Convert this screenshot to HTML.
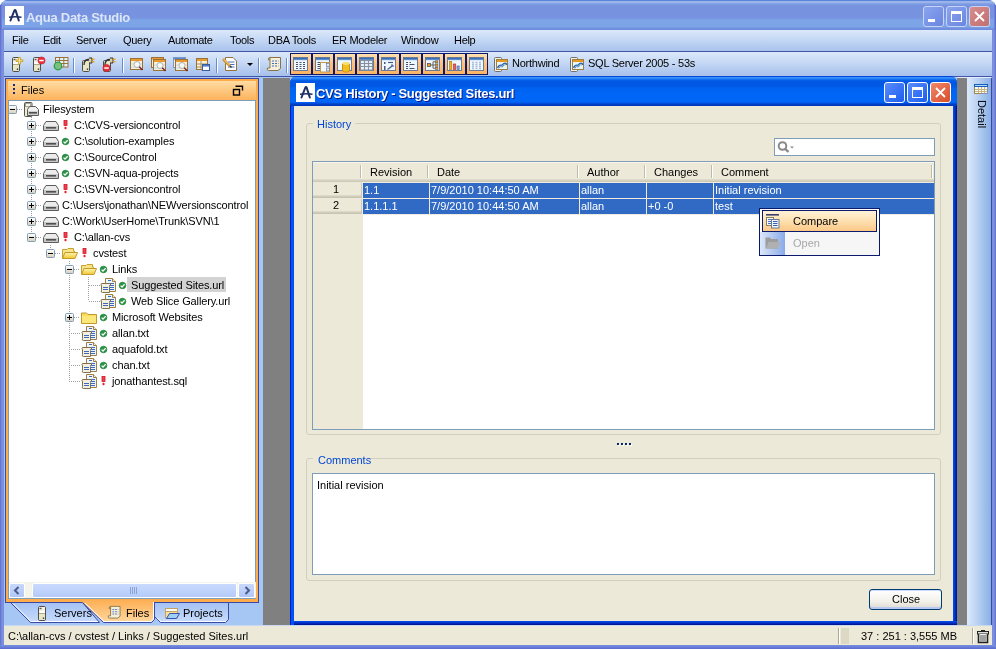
<!DOCTYPE html><html><head><meta charset="utf-8"><style>
*{margin:0;padding:0;box-sizing:border-box}
html,body{width:996px;height:649px;overflow:hidden;background:#fff}
body{position:relative;font-family:"Liberation Sans",sans-serif;font-size:11px;color:#000}
.t{position:absolute;white-space:pre;font-size:11px;line-height:13px;will-change:transform}
svg{overflow:visible}
</style></head><body>
<svg width="0" height="0" style="position:absolute"><defs>
<linearGradient id="wh" x1="0" y1="0" x2="0" y2="1"><stop offset="0" stop-color="#2a5ca8"/><stop offset="1" stop-color="#78a8e0"/></linearGradient>
<linearGradient id="fo" x1="0" y1="0" x2="0" y2="1"><stop offset="0" stop-color="#fff4b0"/><stop offset="1" stop-color="#f0c830"/></linearGradient>
<linearGradient id="eg" x1="0" y1="0" x2="0" y2="1"><stop offset="0" stop-color="#ffffff"/><stop offset="1" stop-color="#d6cfb8"/></linearGradient>
</defs></svg>

<div style="position:absolute;left:0px;top:0px;width:996px;height:649px;background:#7590e0;border-radius:8px 8px 0 0"></div>
<div style="position:absolute;left:0px;top:30px;width:4px;height:619px;background:linear-gradient(90deg,#5a6ad0,#7080d8 25%,#7a90dc 50%,#7890e0)"></div>
<div style="position:absolute;left:992px;top:30px;width:4px;height:619px;background:linear-gradient(90deg,#7890e0,#7a90dc 50%,#7080d8 75%,#5a6ad0)"></div>
<div style="position:absolute;left:0px;top:645px;width:996px;height:4px;background:linear-gradient(180deg,#7890e0,#6a7ed8,#5a6ad0)"></div>
<div style="position:absolute;left:0px;top:0px;width:996px;height:30px;border-radius:8px 8px 0 0;background:linear-gradient(180deg,#5a84dc 0px,#5a84dc 1px,#9cb4ea 1px,#9cb4ea 3px,#86a4e6 3px,#7a9ae2 5px,#7792de 5px,#7894e0 18px,#7a9ee4 19px,#7ca4e6 20px,#7ca4e6 27px,#7494e0 28px,#6c88dc 30px)"></div>
<div style="position:absolute;left:0px;top:5px;width:1px;height:25px;background:#5a6ad0"></div>
<div style="position:absolute;left:1px;top:4px;width:1px;height:26px;background:#7080d8"></div>
<div style="position:absolute;left:995px;top:5px;width:1px;height:25px;background:#5a6ad0"></div>
<div style="position:absolute;left:994px;top:4px;width:1px;height:26px;background:#7080d8"></div>
<div style="position:absolute;left:5px;top:6px;width:19px;height:19px;background:#fff"></div>
<svg style="position:absolute;left:5px;top:6px;" width="19" height="19" viewBox="0 0 19 19"><path d="M5.5 14.5 L9.3 4.6 Q10 3.6 10.7 4.6 L13.8 14.5" stroke="#1e2e64" stroke-width="2" fill="none" stroke-linecap="round"/><path d="M4 11.3 Q10 10.2 16.5 11.3" stroke="#1e2e64" stroke-width="1.5" fill="none"/></svg>
<div class="t" style="left:26px;top:10.5px;font-weight:bold;font-size:13px;line-height:13px;letter-spacing:-0.27px;color:#dce6f8">Aqua Data Studio</div>
<div style="position:absolute;left:923px;top:6px;width:21px;height:21px;border:1px solid #c8d4f4;border-radius:3px;background:linear-gradient(135deg,#8aa4ee,#6a86e0)"></div>
<div style="position:absolute;left:946px;top:6px;width:21px;height:21px;border:1px solid #c8d4f4;border-radius:3px;background:linear-gradient(135deg,#8aa4ee,#6a86e0)"></div>
<div style="position:absolute;left:969px;top:6px;width:21px;height:21px;border:1px solid #c8d4f4;border-radius:3px;background:linear-gradient(135deg,#d88c8c,#c07070)"></div>
<div style="position:absolute;left:928px;top:19px;width:7px;height:3px;background:#fff"></div>
<div style="position:absolute;left:951px;top:11px;width:11px;height:11px;border:1px solid #fff;border-top-width:3px"></div>
<svg style="position:absolute;left:974px;top:11px;" width="11" height="11" viewBox="0 0 11 11"><path d="M1 1 L10 10 M10 1 L1 10" stroke="#fff" stroke-width="1.8"/></svg>
<div style="position:absolute;left:4px;top:30px;width:988px;height:21px;background:linear-gradient(180deg,#dde9fa,#c2d6f4 50%,#a9c3ec)"></div>
<div style="position:absolute;left:4px;top:51px;width:988px;height:1px;background:#4454a8"></div>
<div class="t" style="left:12px;top:34px;letter-spacing:-0.3px">File</div>
<div class="t" style="left:43px;top:34px;letter-spacing:-0.3px">Edit</div>
<div class="t" style="left:76px;top:34px;letter-spacing:-0.3px">Server</div>
<div class="t" style="left:123px;top:34px;letter-spacing:-0.3px">Query</div>
<div class="t" style="left:168px;top:34px;letter-spacing:-0.3px">Automate</div>
<div class="t" style="left:230px;top:34px;letter-spacing:-0.3px">Tools</div>
<div class="t" style="left:268px;top:34px;letter-spacing:-0.3px">DBA Tools</div>
<div class="t" style="left:332px;top:34px;letter-spacing:-0.3px">ER Modeler</div>
<div class="t" style="left:401px;top:34px;letter-spacing:-0.3px">Window</div>
<div class="t" style="left:454px;top:34px;letter-spacing:-0.3px">Help</div>
<div style="position:absolute;left:4px;top:52px;width:988px;height:24px;background:linear-gradient(180deg,#dde9fa,#c2d6f4 50%,#a6c0eb)"></div>
<div style="position:absolute;left:4px;top:76px;width:988px;height:1px;background:#4454a8"></div>
<div style="position:absolute;left:4px;top:77px;width:988px;height:548px;background:#a6c6f4"></div>
<svg style="position:absolute;left:12px;top:57px;" width="16" height="16" viewBox="0 0 16 16"><rect x="0.5" y="0.5" width="7" height="14" rx="1.2" fill="#e9e6c6" stroke="#4e4e4e"/><rect x="1" y="1" width="6" height="4" fill="#f4f2e0"/><rect x="1.5" y="1.8" width="2" height="1.4" fill="#555"/><rect x="1" y="5" width="6" height="2" fill="#fff"/><rect x="1" y="7" width="6" height="0.8" fill="#9a9a80"/><rect x="4.8" y="11.5" width="1.4" height="1.4" fill="#333"/><path d="M7.5 0 L7.5 7.5 M3.8 3.8 L11.2 3.8" stroke="#c89a18" stroke-width="2.4"/><path d="M7.5 0.8 L7.5 6.7 M4.6 3.8 L10.4 3.8" stroke="#f8e8a0" stroke-width="1"/></svg>
<svg style="position:absolute;left:33px;top:57px;" width="16" height="16" viewBox="0 0 16 16"><rect x="0.5" y="0.5" width="7" height="14" rx="1.2" fill="#e9e6c6" stroke="#4e4e4e"/><rect x="1" y="1" width="6" height="4" fill="#f4f2e0"/><rect x="1.5" y="1.8" width="2" height="1.4" fill="#555"/><rect x="1" y="5" width="6" height="2" fill="#fff"/><rect x="1" y="7" width="6" height="0.8" fill="#9a9a80"/><rect x="4.8" y="11.5" width="1.4" height="1.4" fill="#333"/><circle cx="8.5" cy="3.5" r="3.6" fill="#e8303a" stroke="#c02030" stroke-width="0.6"/><rect x="6.3" y="2.8" width="4.4" height="1.5" fill="#fff"/></svg>
<svg style="position:absolute;left:55px;top:57px;" width="16" height="16" viewBox="0 0 16 16"><rect x="0.5" y="0.5" width="12.5" height="9.5" fill="#e0f2fc" stroke="#9a7238"/><path d="M0.5 3.5 L13 3.5 M0.5 6.5 L13 6.5 M4.5 0.5 L4.5 10 M8.8 0.5 L8.8 10" stroke="#9a7238"/><circle cx="3" cy="9" r="3.8" fill="#7cc080" stroke="#2a9a40" stroke-width="1.2"/></svg>
<div style="position:absolute;left:73px;top:58px;width:1px;height:15px;background:#6a8ad0;box-shadow:1px 0 #fff"></div>
<svg style="position:absolute;left:82px;top:57px;" width="16" height="16" viewBox="0 0 16 16"><rect x="0.5" y="3.5" width="7" height="11" rx="1.2" fill="#e9e6c6" stroke="#4e4e4e"/><path d="M2 8 Q2 3 6 2.5 L8 2.5" stroke="#333" stroke-width="1.3" fill="none"/><path d="M7 1 L10 1 L10 6 L7 6" fill="#d8d0a8" stroke="#333" stroke-width="1"/><rect x="10" y="1.5" width="2.5" height="1.4" fill="#f0a020"/><rect x="10" y="4" width="2.5" height="1.4" fill="#f0a020"/><rect x="4.8" y="11.5" width="1.4" height="1.4" fill="#333"/></svg>
<svg style="position:absolute;left:103px;top:57px;" width="16" height="16" viewBox="0 0 16 16"><rect x="0.5" y="3.5" width="7" height="11" rx="1.2" fill="#e9e6c6" stroke="#4e4e4e"/><path d="M2 8 Q2 3 6 2.5 L8 2.5" stroke="#333" stroke-width="1.3" fill="none"/><path d="M7 1 L10 1 L10 6 L7 6" fill="#d8d0a8" stroke="#333" stroke-width="1"/><rect x="10" y="1.5" width="2.5" height="1.4" fill="#f0a020"/><rect x="10" y="4" width="2.5" height="1.4" fill="#f0a020"/><rect x="4.8" y="11.5" width="1.4" height="1.4" fill="#333"/><circle cx="3.5" cy="11" r="3.6" fill="#e8303a" stroke="#c02030" stroke-width="0.6"/><rect x="1.3" y="10.3" width="4.4" height="1.5" fill="#fff"/></svg>
<div style="position:absolute;left:122px;top:58px;width:1px;height:15px;background:#6a8ad0;box-shadow:1px 0 #fff"></div>
<svg style="position:absolute;left:130px;top:58px;" width="16" height="16" viewBox="0 0 16 16"><rect x="0.5" y="0.5" width="12" height="11" fill="#f4f0dc" stroke="#9a7238"/><rect x="1" y="1" width="11" height="2" fill="#e89a30"/><path d="M1 6 L12 6 M1 9 L12 9" stroke="#c8d8e8"/><circle cx="7" cy="6.5" r="3" fill="#f8f8f8" stroke="#a0a0a0" stroke-width="0.8"/><path d="M9.2 8.7 L12.5 12" stroke="#7a2020" stroke-width="1.4"/></svg>
<svg style="position:absolute;left:151px;top:57px;" width="16" height="16" viewBox="0 0 16 16"><rect x="0.5" y="0.5" width="12" height="10" fill="#f4f0dc" stroke="#9a7238"/><rect x="1" y="1" width="11" height="1.6" fill="#e89a30"/><g transform="translate(2,2)"><rect x="0.5" y="0.5" width="12" height="11" fill="#f4f0dc" stroke="#9a7238"/><rect x="1" y="1" width="11" height="2" fill="#e89a30"/><path d="M1 6 L12 6 M1 9 L12 9" stroke="#c8d8e8"/><circle cx="7" cy="6.5" r="3" fill="#f8f8f8" stroke="#a0a0a0" stroke-width="0.8"/><path d="M9.2 8.7 L12.5 12" stroke="#7a2020" stroke-width="1.4"/></g></svg>
<svg style="position:absolute;left:173px;top:57px;" width="16" height="16" viewBox="0 0 16 16"><rect x="0.5" y="0.5" width="12" height="10" fill="#e8f0f8" stroke="#7a98c8"/><rect x="1" y="1" width="11" height="1.6" fill="#5a8ad0"/><g transform="translate(2,2)"><rect x="0.5" y="0.5" width="12" height="11" fill="#f4f0dc" stroke="#9a7238"/><rect x="1" y="1" width="11" height="2" fill="#e89a30"/><path d="M1 6 L12 6 M1 9 L12 9" stroke="#c8d8e8"/><circle cx="7" cy="6.5" r="3" fill="#f8f8f8" stroke="#a0a0a0" stroke-width="0.8"/><path d="M9.2 8.7 L12.5 12" stroke="#7a2020" stroke-width="1.4"/></g></svg>
<svg style="position:absolute;left:196px;top:58px;" width="16" height="16" viewBox="0 0 16 16"><rect x="0.5" y="0.5" width="11" height="11" fill="#f4f0dc" stroke="#9a7238"/><rect x="1" y="1" width="10" height="2" fill="#e89a30"/><path d="M1 6 L11 6 M1 9 L11 9 M5 3 L5 11" stroke="#a89060"/><rect x="6.5" y="6.5" width="7" height="6" fill="#fff" stroke="#3a5a98"/><rect x="7" y="7" width="6" height="1.6" fill="#4a7ad0"/></svg>
<div style="position:absolute;left:216px;top:58px;width:1px;height:15px;background:#6a8ad0;box-shadow:1px 0 #fff"></div>
<svg style="position:absolute;left:222px;top:56px;" width="16" height="16" viewBox="0 0 16 16"><path d="M3.5 1.5 L11 1.5 L14.5 5 L14.5 14.5 L3.5 14.5 Z" fill="#fff" stroke="#9a7238"/><path d="M6 6 L12.5 6 M6 8.5 L12.5 8.5 M6 11 L12.5 11" stroke="#4c6cb8"/><path d="M1 3 L8 10" stroke="#c89030" stroke-width="2.6"/><path d="M1.5 3 L7.5 9" stroke="#f8d890" stroke-width="1"/><path d="M8 10 L9.5 11.5" stroke="#333" stroke-width="1.4"/></svg>
<svg style="position:absolute;left:247px;top:63px;" width="6" height="4" viewBox="0 0 6 4"><path d="M0 0 L6 0 L3 3 Z" fill="#000"/></svg>
<div style="position:absolute;left:258px;top:58px;width:1px;height:15px;background:#6a8ad0;box-shadow:1px 0 #fff"></div>
<svg style="position:absolute;left:266px;top:56px;" width="16" height="16" viewBox="0 0 16 16"><path d="M4 1.5 L14.5 1.5 L14.5 12.5 L12 14.5 L2.5 14.5 Q0.5 14.5 1.5 12 L4 12 Z" fill="#f4f0dc" stroke="#8a7440"/><path d="M4 1.5 Q2 1.5 2.5 4 L4 4" fill="none" stroke="#8a7440"/><path d="M6 5 L12.5 5 M6 7.5 L12.5 7.5 M6 10 L12.5 10" stroke="#4c6cb8" stroke-dasharray="2 1"/></svg>
<div style="position:absolute;left:286px;top:58px;width:1px;height:15px;background:#6a8ad0;box-shadow:1px 0 #fff"></div>
<div style="position:absolute;left:290px;top:53px;width:198px;height:22px;background:#0a1a6e"></div>
<div style="position:absolute;left:291px;top:54px;width:20px;height:20px;background:linear-gradient(180deg,#ffe0b0,#fdc07a 50%,#fcb462)"></div>
<svg style="position:absolute;left:293px;top:57px;" width="16" height="16" viewBox="0 0 16 16"><rect x="0.5" y="0.5" width="14" height="13" fill="#f0f8ff" stroke="#6a7a98"/><rect x="1" y="1" width="13" height="2.2" fill="url(#wh)"/><path d="M3 5.5 H5 M6.5 5.5 H8.5 M10 5.5 H12 M3 7.5 H5 M6.5 7.5 H8.5 M10 7.5 H12 M3 9.5 H5 M6.5 9.5 H8.5 M10 9.5 H12 M3 11.5 H5 M6.5 11.5 H8.5 M10 11.5 H12" stroke="#4a5068" stroke-width="1.2"/></svg>
<div style="position:absolute;left:313px;top:54px;width:20px;height:20px;background:linear-gradient(180deg,#ffe0b0,#fdc07a 50%,#fcb462)"></div>
<svg style="position:absolute;left:315px;top:57px;" width="16" height="16" viewBox="0 0 16 16"><rect x="0.5" y="0.5" width="14" height="13" fill="#f0f8ff" stroke="#6a7a98"/><rect x="1" y="1" width="13" height="2.2" fill="url(#wh)"/><path d="M2.5 5.5 H5 M2.5 7.5 H5 M2.5 9.5 H5 M2.5 11.5 H5" stroke="#4a5068"/><rect x="5.5" y="5.5" width="9" height="9.5" fill="#f4f8ff" stroke="#b89c58"/><rect x="11.5" y="6.5" width="3" height="3" fill="#dce8f8" stroke="#5a6a90" stroke-width="0.6"/><rect x="11.5" y="11" width="3" height="3" fill="#dce8f8" stroke="#5a6a90" stroke-width="0.6"/></svg>
<div style="position:absolute;left:335px;top:54px;width:20px;height:20px;background:linear-gradient(180deg,#ffe0b0,#fdc07a 50%,#fcb462)"></div>
<svg style="position:absolute;left:337px;top:57px;" width="16" height="16" viewBox="0 0 16 16"><rect x="0.5" y="0.5" width="14" height="13" fill="#f0f8ff" stroke="#6a7a98"/><rect x="1" y="1" width="13" height="2.2" fill="url(#wh)"/><rect x="5.5" y="6" width="7" height="9" rx="2" fill="#f0c020" stroke="#d09010"/><ellipse cx="9" cy="6.5" rx="3.5" ry="1.4" fill="#f8e070"/></svg>
<div style="position:absolute;left:357px;top:54px;width:20px;height:20px;background:linear-gradient(180deg,#ffe0b0,#fdc07a 50%,#fcb462)"></div>
<svg style="position:absolute;left:359px;top:57px;" width="16" height="16" viewBox="0 0 16 16"><rect x="0.5" y="0.5" width="14" height="13" fill="#f0f8ff" stroke="#6a7a98"/><rect x="1" y="1" width="13" height="2.2" fill="url(#wh)"/><rect x="1.5" y="3.5" width="12" height="9.5" fill="#e8f4fc" stroke="#8890a0"/><path d="M1.5 6.5 H13.5 M1.5 9.5 H13.5 M5.5 3.5 V13 M9.5 3.5 V13" stroke="#8890a0" stroke-width="1.2"/></svg>
<div style="position:absolute;left:379px;top:54px;width:20px;height:20px;background:linear-gradient(180deg,#ffe0b0,#fdc07a 50%,#fcb462)"></div>
<svg style="position:absolute;left:381px;top:57px;" width="16" height="16" viewBox="0 0 16 16"><rect x="0.5" y="0.5" width="14" height="13" fill="#f0f8ff" stroke="#6a7a98"/><rect x="1" y="1" width="13" height="2.2" fill="url(#wh)"/><rect x="3" y="9" width="1.5" height="4" fill="#4a5a88"/><rect x="3" y="5" width="1.5" height="2" fill="#4a5a88"/><path d="M7 5.5 H12" stroke="#4a5a88" stroke-width="1.2"/><path d="M6.5 12.5 Q9 11 11.5 8.5" stroke="#4a5a88" stroke-width="1.2" fill="none"/><path d="M10 8 L12 8 L12 10" stroke="#4a5a88" fill="none"/></svg>
<div style="position:absolute;left:401px;top:54px;width:20px;height:20px;background:linear-gradient(180deg,#ffe0b0,#fdc07a 50%,#fcb462)"></div>
<svg style="position:absolute;left:403px;top:57px;" width="16" height="16" viewBox="0 0 16 16"><rect x="0.5" y="0.5" width="14" height="13" fill="#f0f8ff" stroke="#6a7a98"/><rect x="1" y="1" width="13" height="2.2" fill="url(#wh)"/><path d="M3 5.5 H5 M6.5 5.5 H8 M3 7.5 H5 M6.5 7.5 H11.5 M3 9.5 H5 M6.5 9.5 H7 M3 11.5 H5 M6.5 11.5 H11.5" stroke="#4a5068" stroke-width="1.1"/></svg>
<div style="position:absolute;left:423px;top:54px;width:20px;height:20px;background:linear-gradient(180deg,#ffe0b0,#fdc07a 50%,#fcb462)"></div>
<svg style="position:absolute;left:425px;top:57px;" width="16" height="16" viewBox="0 0 16 16"><rect x="0.5" y="0.5" width="14" height="13" fill="#f0f8ff" stroke="#6a7a98"/><rect x="1" y="1" width="13" height="2.2" fill="url(#wh)"/><rect x="2.5" y="6.5" width="3" height="3" fill="#f0a020" stroke="#555" stroke-width="0.8"/><path d="M5.5 8 H8 M8 4.8 V11.2 M8 4.8 H10.5 M8 8 H10.5 M8 11.2 H10.5" stroke="#555" stroke-width="0.9" fill="none"/><rect x="10.5" y="3.8" width="2.4" height="2.2" fill="#f0a020" stroke="#555" stroke-width="0.6"/><rect x="10.5" y="7" width="2.4" height="2.2" fill="#f0a020" stroke="#555" stroke-width="0.6"/><rect x="10.5" y="10.2" width="2.4" height="2.2" fill="#f0a020" stroke="#555" stroke-width="0.6"/></svg>
<div style="position:absolute;left:445px;top:54px;width:20px;height:20px;background:linear-gradient(180deg,#ffe0b0,#fdc07a 50%,#fcb462)"></div>
<svg style="position:absolute;left:447px;top:57px;" width="16" height="16" viewBox="0 0 16 16"><rect x="0.5" y="0.5" width="14" height="13" fill="#f0f8ff" stroke="#6a7a98"/><rect x="1" y="1" width="13" height="2.2" fill="url(#wh)"/><rect x="2.5" y="4.5" width="2.2" height="8" fill="#f0b020" stroke="#b08010" stroke-width="0.7"/><rect x="6.3" y="7" width="2.4" height="5.5" fill="#f06060" stroke="#c03030" stroke-width="0.7"/><rect x="10" y="9" width="2.2" height="3.5" fill="#80a8d8" stroke="#4a70a8" stroke-width="0.7"/></svg>
<div style="position:absolute;left:467px;top:54px;width:20px;height:20px;background:linear-gradient(180deg,#ffe0b0,#fdc07a 50%,#fcb462)"></div>
<svg style="position:absolute;left:469px;top:57px;" width="16" height="16" viewBox="0 0 16 16"><rect x="0.5" y="0.5" width="14" height="13" fill="#f0f8ff" stroke="#6a7a98"/><rect x="1" y="1" width="13" height="2.2" fill="url(#wh)"/><path d="M3 5.5 H5 M6.5 5.5 H8.5 M10 5.5 H12 M3 7.5 H5 M6.5 7.5 H8.5 M10 7.5 H12 M3 9.5 H5 M6.5 9.5 H8.5 M10 9.5 H12 M3 11.5 H5 M6.5 11.5 H8.5 M10 11.5 H12" stroke="#a8bcd8" stroke-width="1.3"/></svg>
<svg style="position:absolute;left:494px;top:57px;" width="16" height="16" viewBox="0 0 16 16"><rect x="0.5" y="0.5" width="7" height="14" rx="1" fill="#f4f2ea" stroke="#707070"/><rect x="2.5" y="2.5" width="11" height="10" fill="#e8f4fc" stroke="#a08040"/><rect x="3" y="3" width="10" height="2" fill="#e89a20"/><path d="M4 11 Q5 8 8 9 L10 7 Q12 6 12.5 8" stroke="#2a60b0" stroke-width="2.4" fill="none"/><path d="M4.5 10.5 Q5.5 8.5 8 9.3 L10 7.5 Q11.5 6.8 12 8" stroke="#a8d0c8" stroke-width="1" fill="none"/></svg>
<div class="t" style="left:512px;top:57px;letter-spacing:-0.24px">Northwind</div>
<svg style="position:absolute;left:570px;top:57px;" width="16" height="16" viewBox="0 0 16 16"><rect x="0.5" y="0.5" width="7" height="14" rx="1" fill="#f4f2ea" stroke="#707070"/><rect x="2.5" y="2.5" width="11" height="10" fill="#e8f4fc" stroke="#a08040"/><rect x="3" y="3" width="10" height="2" fill="#e89a20"/><path d="M4 11 Q5 8 8 9 L10 7 Q12 6 12.5 8" stroke="#2a60b0" stroke-width="2.4" fill="none"/><path d="M4.5 10.5 Q5.5 8.5 8 9.3 L10 7.5 Q11.5 6.8 12 8" stroke="#a8d0c8" stroke-width="1" fill="none"/></svg>
<div class="t" style="left:588px;top:57px;letter-spacing:-0.24px">SQL Server 2005 - 53s</div>
<div style="position:absolute;left:5px;top:78px;width:254px;height:525px;background:#3a48a8"></div>
<div style="position:absolute;left:6px;top:79px;width:252px;height:523px;background:#ffad4a"></div>
<div style="position:absolute;left:8px;top:81px;width:248px;height:19px;background:linear-gradient(180deg,#ffdca4,#fdb35c)"></div>
<div style="position:absolute;left:13px;top:84px;width:2px;height:2px;background:#1a2a7a"></div>
<div style="position:absolute;left:13px;top:88px;width:2px;height:2px;background:#1a2a7a"></div>
<div style="position:absolute;left:13px;top:92px;width:2px;height:2px;background:#1a2a7a"></div>
<div class="t" style="left:21px;top:84px;">Files</div>
<svg style="position:absolute;left:232px;top:85px;" width="12" height="11" viewBox="0 0 12 11"><rect x="1.5" y="4.5" width="6" height="5.5" fill="none" stroke="#000" stroke-width="1.4"/><path d="M3.5 1.2 L10.5 1.2 L10.5 5.5" fill="none" stroke="#000" stroke-width="1.4"/></svg>
<div style="position:absolute;left:8px;top:100px;width:248px;height:499px;background:#fff;border:1px solid #7f9db9"></div>
<div style="position:absolute;left:31px;top:117px;width:1px;height:120px;background:repeating-linear-gradient(180deg,#a0a0a0 0 1px,transparent 1px 2px)"></div>
<div style="position:absolute;left:50px;top:245px;width:1px;height:8px;background:repeating-linear-gradient(180deg,#a0a0a0 0 1px,transparent 1px 2px)"></div>
<div style="position:absolute;left:69px;top:261px;width:1px;height:120px;background:repeating-linear-gradient(180deg,#a0a0a0 0 1px,transparent 1px 2px)"></div>
<div style="position:absolute;left:88px;top:277px;width:1px;height:24px;background:repeating-linear-gradient(180deg,#a0a0a0 0 1px,transparent 1px 2px)"></div>
<div style="position:absolute;left:17px;top:109px;width:6px;height:1px;background:repeating-linear-gradient(90deg,#a0a0a0 0 1px,transparent 1px 2px)"></div>
<svg style="position:absolute;left:8px;top:105px;" width="9" height="9" viewBox="0 0 9 9"><rect x="0.5" y="0.5" width="8" height="8" rx="1" fill="url(#eg)" stroke="#7f9db9"/><path d="M2 4.5 L7 4.5" stroke="#000" stroke-width="1"/></svg>
<svg style="position:absolute;left:24px;top:102px;" width="16" height="16" viewBox="0 0 16 16"><rect x="0.5" y="0.5" width="7.5" height="14" rx="1" fill="#eeeacc" stroke="#555"/><rect x="1.5" y="1.5" width="5" height="3" fill="#f8f6e8" stroke="#777" stroke-width="0.6"/><path d="M5.5 4.5 L11.5 4.5 L14.5 7.5 L14.5 13.5 L3.5 13.5 L3.5 7.5 Z" fill="#f0f0f0" stroke="#5c5c5c"/><rect x="4" y="9" width="10" height="4" fill="#d0d0d0"/><rect x="5" y="10" width="8" height="1.6" fill="#505050"/></svg>
<div class="t" style="left:43px;top:103px;letter-spacing:-0.12px">Filesystem</div>
<div style="position:absolute;left:36px;top:125px;width:6px;height:1px;background:repeating-linear-gradient(90deg,#a0a0a0 0 1px,transparent 1px 2px)"></div>
<svg style="position:absolute;left:27px;top:121px;" width="9" height="9" viewBox="0 0 9 9"><rect x="0.5" y="0.5" width="8" height="8" rx="1" fill="url(#eg)" stroke="#7f9db9"/><path d="M2 4.5 L7 4.5" stroke="#000" stroke-width="1"/><path d="M4.5 2 L4.5 7" stroke="#000" stroke-width="1"/></svg>
<svg style="position:absolute;left:43px;top:120px;" width="16" height="12" viewBox="0 0 16 12"><path d="M3 1.5 L13 1.5 L15.5 5.5 L15.5 10.5 L0.5 10.5 L0.5 5.5 Z" fill="#ececec" stroke="#5c5c5c" stroke-width="1"/><rect x="1" y="6" width="14" height="4" fill="#c8c8c8"/><rect x="3" y="7" width="10" height="1.6" fill="#505050"/></svg>
<svg style="position:absolute;left:63px;top:120px;" width="5" height="10" viewBox="0 0 5 10"><rect x="1" y="0.5" width="3" height="5" fill="#f04048" stroke="#d01828" stroke-width="0.8"/><path d="M2.5 6.5 L4 8 L2.5 9.5 L1 8 Z" fill="#e82030"/></svg>
<div class="t" style="left:74px;top:119px;letter-spacing:-0.12px">C:&#92;CVS-versioncontrol</div>
<div style="position:absolute;left:36px;top:141px;width:6px;height:1px;background:repeating-linear-gradient(90deg,#a0a0a0 0 1px,transparent 1px 2px)"></div>
<svg style="position:absolute;left:27px;top:137px;" width="9" height="9" viewBox="0 0 9 9"><rect x="0.5" y="0.5" width="8" height="8" rx="1" fill="url(#eg)" stroke="#7f9db9"/><path d="M2 4.5 L7 4.5" stroke="#000" stroke-width="1"/><path d="M4.5 2 L4.5 7" stroke="#000" stroke-width="1"/></svg>
<svg style="position:absolute;left:43px;top:136px;" width="16" height="12" viewBox="0 0 16 12"><path d="M3 1.5 L13 1.5 L15.5 5.5 L15.5 10.5 L0.5 10.5 L0.5 5.5 Z" fill="#ececec" stroke="#5c5c5c" stroke-width="1"/><rect x="1" y="6" width="14" height="4" fill="#c8c8c8"/><rect x="3" y="7" width="10" height="1.6" fill="#505050"/></svg>
<svg style="position:absolute;left:62px;top:138px;" width="7" height="7" viewBox="0 0 7 7"><circle cx="3.5" cy="3.5" r="3.3" fill="#2a9244" stroke="#168030" stroke-width="0.7"/><path d="M1.6 3.6 L3 5.1 L5.6 2.2" stroke="#fff" stroke-width="1.3" fill="none"/></svg>
<div class="t" style="left:74px;top:135px;letter-spacing:-0.12px">C:&#92;solution-examples</div>
<div style="position:absolute;left:36px;top:157px;width:6px;height:1px;background:repeating-linear-gradient(90deg,#a0a0a0 0 1px,transparent 1px 2px)"></div>
<svg style="position:absolute;left:27px;top:153px;" width="9" height="9" viewBox="0 0 9 9"><rect x="0.5" y="0.5" width="8" height="8" rx="1" fill="url(#eg)" stroke="#7f9db9"/><path d="M2 4.5 L7 4.5" stroke="#000" stroke-width="1"/><path d="M4.5 2 L4.5 7" stroke="#000" stroke-width="1"/></svg>
<svg style="position:absolute;left:43px;top:152px;" width="16" height="12" viewBox="0 0 16 12"><path d="M3 1.5 L13 1.5 L15.5 5.5 L15.5 10.5 L0.5 10.5 L0.5 5.5 Z" fill="#ececec" stroke="#5c5c5c" stroke-width="1"/><rect x="1" y="6" width="14" height="4" fill="#c8c8c8"/><rect x="3" y="7" width="10" height="1.6" fill="#505050"/></svg>
<svg style="position:absolute;left:62px;top:154px;" width="7" height="7" viewBox="0 0 7 7"><circle cx="3.5" cy="3.5" r="3.3" fill="#2a9244" stroke="#168030" stroke-width="0.7"/><path d="M1.6 3.6 L3 5.1 L5.6 2.2" stroke="#fff" stroke-width="1.3" fill="none"/></svg>
<div class="t" style="left:74px;top:151px;letter-spacing:-0.12px">C:&#92;SourceControl</div>
<div style="position:absolute;left:36px;top:173px;width:6px;height:1px;background:repeating-linear-gradient(90deg,#a0a0a0 0 1px,transparent 1px 2px)"></div>
<svg style="position:absolute;left:27px;top:169px;" width="9" height="9" viewBox="0 0 9 9"><rect x="0.5" y="0.5" width="8" height="8" rx="1" fill="url(#eg)" stroke="#7f9db9"/><path d="M2 4.5 L7 4.5" stroke="#000" stroke-width="1"/><path d="M4.5 2 L4.5 7" stroke="#000" stroke-width="1"/></svg>
<svg style="position:absolute;left:43px;top:168px;" width="16" height="12" viewBox="0 0 16 12"><path d="M3 1.5 L13 1.5 L15.5 5.5 L15.5 10.5 L0.5 10.5 L0.5 5.5 Z" fill="#ececec" stroke="#5c5c5c" stroke-width="1"/><rect x="1" y="6" width="14" height="4" fill="#c8c8c8"/><rect x="3" y="7" width="10" height="1.6" fill="#505050"/></svg>
<svg style="position:absolute;left:62px;top:170px;" width="7" height="7" viewBox="0 0 7 7"><circle cx="3.5" cy="3.5" r="3.3" fill="#2a9244" stroke="#168030" stroke-width="0.7"/><path d="M1.6 3.6 L3 5.1 L5.6 2.2" stroke="#fff" stroke-width="1.3" fill="none"/></svg>
<div class="t" style="left:74px;top:167px;letter-spacing:-0.12px">C:&#92;SVN-aqua-projects</div>
<div style="position:absolute;left:36px;top:189px;width:6px;height:1px;background:repeating-linear-gradient(90deg,#a0a0a0 0 1px,transparent 1px 2px)"></div>
<svg style="position:absolute;left:27px;top:185px;" width="9" height="9" viewBox="0 0 9 9"><rect x="0.5" y="0.5" width="8" height="8" rx="1" fill="url(#eg)" stroke="#7f9db9"/><path d="M2 4.5 L7 4.5" stroke="#000" stroke-width="1"/><path d="M4.5 2 L4.5 7" stroke="#000" stroke-width="1"/></svg>
<svg style="position:absolute;left:43px;top:184px;" width="16" height="12" viewBox="0 0 16 12"><path d="M3 1.5 L13 1.5 L15.5 5.5 L15.5 10.5 L0.5 10.5 L0.5 5.5 Z" fill="#ececec" stroke="#5c5c5c" stroke-width="1"/><rect x="1" y="6" width="14" height="4" fill="#c8c8c8"/><rect x="3" y="7" width="10" height="1.6" fill="#505050"/></svg>
<svg style="position:absolute;left:63px;top:184px;" width="5" height="10" viewBox="0 0 5 10"><rect x="1" y="0.5" width="3" height="5" fill="#f04048" stroke="#d01828" stroke-width="0.8"/><path d="M2.5 6.5 L4 8 L2.5 9.5 L1 8 Z" fill="#e82030"/></svg>
<div class="t" style="left:74px;top:183px;letter-spacing:-0.12px">C:&#92;SVN-versioncontrol</div>
<div style="position:absolute;left:36px;top:205px;width:6px;height:1px;background:repeating-linear-gradient(90deg,#a0a0a0 0 1px,transparent 1px 2px)"></div>
<svg style="position:absolute;left:27px;top:201px;" width="9" height="9" viewBox="0 0 9 9"><rect x="0.5" y="0.5" width="8" height="8" rx="1" fill="url(#eg)" stroke="#7f9db9"/><path d="M2 4.5 L7 4.5" stroke="#000" stroke-width="1"/><path d="M4.5 2 L4.5 7" stroke="#000" stroke-width="1"/></svg>
<svg style="position:absolute;left:43px;top:200px;" width="16" height="12" viewBox="0 0 16 12"><path d="M3 1.5 L13 1.5 L15.5 5.5 L15.5 10.5 L0.5 10.5 L0.5 5.5 Z" fill="#ececec" stroke="#5c5c5c" stroke-width="1"/><rect x="1" y="6" width="14" height="4" fill="#c8c8c8"/><rect x="3" y="7" width="10" height="1.6" fill="#505050"/></svg>
<div class="t" style="left:62px;top:199px;letter-spacing:-0.12px">C:&#92;Users&#92;jonathan&#92;NEWversionscontrol</div>
<div style="position:absolute;left:36px;top:221px;width:6px;height:1px;background:repeating-linear-gradient(90deg,#a0a0a0 0 1px,transparent 1px 2px)"></div>
<svg style="position:absolute;left:27px;top:217px;" width="9" height="9" viewBox="0 0 9 9"><rect x="0.5" y="0.5" width="8" height="8" rx="1" fill="url(#eg)" stroke="#7f9db9"/><path d="M2 4.5 L7 4.5" stroke="#000" stroke-width="1"/><path d="M4.5 2 L4.5 7" stroke="#000" stroke-width="1"/></svg>
<svg style="position:absolute;left:43px;top:216px;" width="16" height="12" viewBox="0 0 16 12"><path d="M3 1.5 L13 1.5 L15.5 5.5 L15.5 10.5 L0.5 10.5 L0.5 5.5 Z" fill="#ececec" stroke="#5c5c5c" stroke-width="1"/><rect x="1" y="6" width="14" height="4" fill="#c8c8c8"/><rect x="3" y="7" width="10" height="1.6" fill="#505050"/></svg>
<div class="t" style="left:62px;top:215px;letter-spacing:-0.12px">C:&#92;Work&#92;UserHome&#92;Trunk&#92;SVN&#92;1</div>
<div style="position:absolute;left:36px;top:237px;width:6px;height:1px;background:repeating-linear-gradient(90deg,#a0a0a0 0 1px,transparent 1px 2px)"></div>
<svg style="position:absolute;left:27px;top:233px;" width="9" height="9" viewBox="0 0 9 9"><rect x="0.5" y="0.5" width="8" height="8" rx="1" fill="url(#eg)" stroke="#7f9db9"/><path d="M2 4.5 L7 4.5" stroke="#000" stroke-width="1"/></svg>
<svg style="position:absolute;left:43px;top:232px;" width="16" height="12" viewBox="0 0 16 12"><path d="M3 1.5 L13 1.5 L15.5 5.5 L15.5 10.5 L0.5 10.5 L0.5 5.5 Z" fill="#ececec" stroke="#5c5c5c" stroke-width="1"/><rect x="1" y="6" width="14" height="4" fill="#c8c8c8"/><rect x="3" y="7" width="10" height="1.6" fill="#505050"/></svg>
<svg style="position:absolute;left:63px;top:232px;" width="5" height="10" viewBox="0 0 5 10"><rect x="1" y="0.5" width="3" height="5" fill="#f04048" stroke="#d01828" stroke-width="0.8"/><path d="M2.5 6.5 L4 8 L2.5 9.5 L1 8 Z" fill="#e82030"/></svg>
<div class="t" style="left:74px;top:231px;letter-spacing:-0.12px">C:&#92;allan-cvs</div>
<div style="position:absolute;left:55px;top:253px;width:6px;height:1px;background:repeating-linear-gradient(90deg,#a0a0a0 0 1px,transparent 1px 2px)"></div>
<svg style="position:absolute;left:46px;top:249px;" width="9" height="9" viewBox="0 0 9 9"><rect x="0.5" y="0.5" width="8" height="8" rx="1" fill="url(#eg)" stroke="#7f9db9"/><path d="M2 4.5 L7 4.5" stroke="#000" stroke-width="1"/></svg>
<svg style="position:absolute;left:62px;top:248px;" width="16" height="12" viewBox="0 0 16 12"><path d="M0.5 10.5 V1.5 H5 L6 0.5 H11.5 V3 H12.5 V5" fill="#f8e488" stroke="#c8a030"/><path d="M0.5 10.5 L3 4.5 H15.5 L13 10.5 Z" fill="url(#fo)" stroke="#c39a2a"/></svg>
<svg style="position:absolute;left:82px;top:248px;" width="5" height="10" viewBox="0 0 5 10"><rect x="1" y="0.5" width="3" height="5" fill="#f04048" stroke="#d01828" stroke-width="0.8"/><path d="M2.5 6.5 L4 8 L2.5 9.5 L1 8 Z" fill="#e82030"/></svg>
<div class="t" style="left:93px;top:247px;letter-spacing:-0.12px">cvstest</div>
<div style="position:absolute;left:74px;top:269px;width:6px;height:1px;background:repeating-linear-gradient(90deg,#a0a0a0 0 1px,transparent 1px 2px)"></div>
<svg style="position:absolute;left:65px;top:265px;" width="9" height="9" viewBox="0 0 9 9"><rect x="0.5" y="0.5" width="8" height="8" rx="1" fill="url(#eg)" stroke="#7f9db9"/><path d="M2 4.5 L7 4.5" stroke="#000" stroke-width="1"/></svg>
<svg style="position:absolute;left:81px;top:264px;" width="16" height="12" viewBox="0 0 16 12"><path d="M0.5 10.5 V1.5 H5 L6 0.5 H11.5 V3 H12.5 V5" fill="#f8e488" stroke="#c8a030"/><path d="M0.5 10.5 L3 4.5 H15.5 L13 10.5 Z" fill="url(#fo)" stroke="#c39a2a"/></svg>
<svg style="position:absolute;left:100px;top:266px;" width="7" height="7" viewBox="0 0 7 7"><circle cx="3.5" cy="3.5" r="3.3" fill="#2a9244" stroke="#168030" stroke-width="0.7"/><path d="M1.6 3.6 L3 5.1 L5.6 2.2" stroke="#fff" stroke-width="1.3" fill="none"/></svg>
<div class="t" style="left:112px;top:263px;letter-spacing:-0.12px">Links</div>
<div style="position:absolute;left:89px;top:285px;width:11px;height:1px;background:repeating-linear-gradient(90deg,#a0a0a0 0 1px,transparent 1px 2px)"></div>
<svg style="position:absolute;left:100px;top:277px;" width="16" height="16" viewBox="0 0 16 16"><path d="M5.5 1.5 L12.5 1.5 L15.5 4.5 L15.5 14.5 L5.5 14.5 Z" fill="#eef4fc" stroke="#a08040"/><path d="M12.5 1.5 L12.5 4.5 L15.5 4.5" fill="#f8f0d0" stroke="#a08040"/><path d="M8 3.5 L11 3.5 M10 6.5 L14 6.5 M10 8.5 L14 8.5 M10 10.5 L14 10.5 M10 12.5 L14 12.5" stroke="#3a6ac0"/><path d="M1.5 6.5 L10.5 6.5 L10.5 8 Q9 8 9.5 9.5 L9.5 15.5 L2.5 15.5 Q0.5 15.5 1.5 13.5 L1.5 9 Q0.5 6.5 1.5 6.5 Z" fill="#f4f0e0" stroke="#807050"/><path d="M3 10.5 L8 10.5 M3 12.5 L8 12.5" stroke="#3a6ac0"/></svg>
<svg style="position:absolute;left:119px;top:282px;" width="7" height="7" viewBox="0 0 7 7"><circle cx="3.5" cy="3.5" r="3.3" fill="#2a9244" stroke="#168030" stroke-width="0.7"/><path d="M1.6 3.6 L3 5.1 L5.6 2.2" stroke="#fff" stroke-width="1.3" fill="none"/></svg>
<div style="position:absolute;left:127px;top:277px;width:99px;height:15px;background:#d3d3d3"></div>
<div class="t" style="left:131px;top:279px;letter-spacing:-0.12px">Suggested Sites.url</div>
<div style="position:absolute;left:89px;top:301px;width:11px;height:1px;background:repeating-linear-gradient(90deg,#a0a0a0 0 1px,transparent 1px 2px)"></div>
<svg style="position:absolute;left:100px;top:293px;" width="16" height="16" viewBox="0 0 16 16"><path d="M5.5 1.5 L12.5 1.5 L15.5 4.5 L15.5 14.5 L5.5 14.5 Z" fill="#eef4fc" stroke="#a08040"/><path d="M12.5 1.5 L12.5 4.5 L15.5 4.5" fill="#f8f0d0" stroke="#a08040"/><path d="M8 3.5 L11 3.5 M10 6.5 L14 6.5 M10 8.5 L14 8.5 M10 10.5 L14 10.5 M10 12.5 L14 12.5" stroke="#3a6ac0"/><path d="M1.5 6.5 L10.5 6.5 L10.5 8 Q9 8 9.5 9.5 L9.5 15.5 L2.5 15.5 Q0.5 15.5 1.5 13.5 L1.5 9 Q0.5 6.5 1.5 6.5 Z" fill="#f4f0e0" stroke="#807050"/><path d="M3 10.5 L8 10.5 M3 12.5 L8 12.5" stroke="#3a6ac0"/></svg>
<svg style="position:absolute;left:119px;top:298px;" width="7" height="7" viewBox="0 0 7 7"><circle cx="3.5" cy="3.5" r="3.3" fill="#2a9244" stroke="#168030" stroke-width="0.7"/><path d="M1.6 3.6 L3 5.1 L5.6 2.2" stroke="#fff" stroke-width="1.3" fill="none"/></svg>
<div class="t" style="left:131px;top:295px;letter-spacing:-0.12px">Web Slice Gallery.url</div>
<div style="position:absolute;left:74px;top:317px;width:6px;height:1px;background:repeating-linear-gradient(90deg,#a0a0a0 0 1px,transparent 1px 2px)"></div>
<svg style="position:absolute;left:65px;top:313px;" width="9" height="9" viewBox="0 0 9 9"><rect x="0.5" y="0.5" width="8" height="8" rx="1" fill="url(#eg)" stroke="#7f9db9"/><path d="M2 4.5 L7 4.5" stroke="#000" stroke-width="1"/><path d="M4.5 2 L4.5 7" stroke="#000" stroke-width="1"/></svg>
<svg style="position:absolute;left:81px;top:311px;" width="16" height="13" viewBox="0 0 16 13"><path d="M0.5 2 L5.5 2 L7 3.5 L15.5 3.5 L15.5 12.5 L0.5 12.5 Z" fill="#f8dc5c" stroke="#c39a2a"/><rect x="1" y="5" width="14" height="7" fill="#fbe77a"/></svg>
<svg style="position:absolute;left:100px;top:314px;" width="7" height="7" viewBox="0 0 7 7"><circle cx="3.5" cy="3.5" r="3.3" fill="#2a9244" stroke="#168030" stroke-width="0.7"/><path d="M1.6 3.6 L3 5.1 L5.6 2.2" stroke="#fff" stroke-width="1.3" fill="none"/></svg>
<div class="t" style="left:112px;top:311px;letter-spacing:-0.12px">Microsoft Websites</div>
<div style="position:absolute;left:69px;top:333px;width:12px;height:1px;background:repeating-linear-gradient(90deg,#a0a0a0 0 1px,transparent 1px 2px)"></div>
<svg style="position:absolute;left:81px;top:325px;" width="16" height="16" viewBox="0 0 16 16"><path d="M5.5 1.5 L12.5 1.5 L15.5 4.5 L15.5 14.5 L5.5 14.5 Z" fill="#eef4fc" stroke="#a08040"/><path d="M12.5 1.5 L12.5 4.5 L15.5 4.5" fill="#f8f0d0" stroke="#a08040"/><path d="M8 3.5 L11 3.5 M10 6.5 L14 6.5 M10 8.5 L14 8.5 M10 10.5 L14 10.5 M10 12.5 L14 12.5" stroke="#3a6ac0"/><path d="M1.5 6.5 L10.5 6.5 L10.5 8 Q9 8 9.5 9.5 L9.5 15.5 L2.5 15.5 Q0.5 15.5 1.5 13.5 L1.5 9 Q0.5 6.5 1.5 6.5 Z" fill="#f4f0e0" stroke="#807050"/><path d="M3 10.5 L8 10.5 M3 12.5 L8 12.5" stroke="#3a6ac0"/></svg>
<svg style="position:absolute;left:100px;top:330px;" width="7" height="7" viewBox="0 0 7 7"><circle cx="3.5" cy="3.5" r="3.3" fill="#2a9244" stroke="#168030" stroke-width="0.7"/><path d="M1.6 3.6 L3 5.1 L5.6 2.2" stroke="#fff" stroke-width="1.3" fill="none"/></svg>
<div class="t" style="left:112px;top:327px;letter-spacing:-0.12px">allan.txt</div>
<div style="position:absolute;left:69px;top:349px;width:12px;height:1px;background:repeating-linear-gradient(90deg,#a0a0a0 0 1px,transparent 1px 2px)"></div>
<svg style="position:absolute;left:81px;top:341px;" width="16" height="16" viewBox="0 0 16 16"><path d="M5.5 1.5 L12.5 1.5 L15.5 4.5 L15.5 14.5 L5.5 14.5 Z" fill="#eef4fc" stroke="#a08040"/><path d="M12.5 1.5 L12.5 4.5 L15.5 4.5" fill="#f8f0d0" stroke="#a08040"/><path d="M8 3.5 L11 3.5 M10 6.5 L14 6.5 M10 8.5 L14 8.5 M10 10.5 L14 10.5 M10 12.5 L14 12.5" stroke="#3a6ac0"/><path d="M1.5 6.5 L10.5 6.5 L10.5 8 Q9 8 9.5 9.5 L9.5 15.5 L2.5 15.5 Q0.5 15.5 1.5 13.5 L1.5 9 Q0.5 6.5 1.5 6.5 Z" fill="#f4f0e0" stroke="#807050"/><path d="M3 10.5 L8 10.5 M3 12.5 L8 12.5" stroke="#3a6ac0"/></svg>
<svg style="position:absolute;left:100px;top:346px;" width="7" height="7" viewBox="0 0 7 7"><circle cx="3.5" cy="3.5" r="3.3" fill="#2a9244" stroke="#168030" stroke-width="0.7"/><path d="M1.6 3.6 L3 5.1 L5.6 2.2" stroke="#fff" stroke-width="1.3" fill="none"/></svg>
<div class="t" style="left:112px;top:343px;letter-spacing:-0.12px">aquafold.txt</div>
<div style="position:absolute;left:69px;top:365px;width:12px;height:1px;background:repeating-linear-gradient(90deg,#a0a0a0 0 1px,transparent 1px 2px)"></div>
<svg style="position:absolute;left:81px;top:357px;" width="16" height="16" viewBox="0 0 16 16"><path d="M5.5 1.5 L12.5 1.5 L15.5 4.5 L15.5 14.5 L5.5 14.5 Z" fill="#eef4fc" stroke="#a08040"/><path d="M12.5 1.5 L12.5 4.5 L15.5 4.5" fill="#f8f0d0" stroke="#a08040"/><path d="M8 3.5 L11 3.5 M10 6.5 L14 6.5 M10 8.5 L14 8.5 M10 10.5 L14 10.5 M10 12.5 L14 12.5" stroke="#3a6ac0"/><path d="M1.5 6.5 L10.5 6.5 L10.5 8 Q9 8 9.5 9.5 L9.5 15.5 L2.5 15.5 Q0.5 15.5 1.5 13.5 L1.5 9 Q0.5 6.5 1.5 6.5 Z" fill="#f4f0e0" stroke="#807050"/><path d="M3 10.5 L8 10.5 M3 12.5 L8 12.5" stroke="#3a6ac0"/></svg>
<svg style="position:absolute;left:100px;top:362px;" width="7" height="7" viewBox="0 0 7 7"><circle cx="3.5" cy="3.5" r="3.3" fill="#2a9244" stroke="#168030" stroke-width="0.7"/><path d="M1.6 3.6 L3 5.1 L5.6 2.2" stroke="#fff" stroke-width="1.3" fill="none"/></svg>
<div class="t" style="left:112px;top:359px;letter-spacing:-0.12px">chan.txt</div>
<div style="position:absolute;left:69px;top:381px;width:12px;height:1px;background:repeating-linear-gradient(90deg,#a0a0a0 0 1px,transparent 1px 2px)"></div>
<svg style="position:absolute;left:81px;top:373px;" width="16" height="16" viewBox="0 0 16 16"><path d="M5.5 1.5 L12.5 1.5 L15.5 4.5 L15.5 14.5 L5.5 14.5 Z" fill="#eef4fc" stroke="#a08040"/><path d="M12.5 1.5 L12.5 4.5 L15.5 4.5" fill="#f8f0d0" stroke="#a08040"/><path d="M8 3.5 L11 3.5 M10 6.5 L14 6.5 M10 8.5 L14 8.5 M10 10.5 L14 10.5 M10 12.5 L14 12.5" stroke="#3a6ac0"/><path d="M1.5 6.5 L10.5 6.5 L10.5 8 Q9 8 9.5 9.5 L9.5 15.5 L2.5 15.5 Q0.5 15.5 1.5 13.5 L1.5 9 Q0.5 6.5 1.5 6.5 Z" fill="#f4f0e0" stroke="#807050"/><path d="M3 10.5 L8 10.5 M3 12.5 L8 12.5" stroke="#3a6ac0"/></svg>
<svg style="position:absolute;left:101px;top:376px;" width="5" height="10" viewBox="0 0 5 10"><rect x="1" y="0.5" width="3" height="5" fill="#f04048" stroke="#d01828" stroke-width="0.8"/><path d="M2.5 6.5 L4 8 L2.5 9.5 L1 8 Z" fill="#e82030"/></svg>
<div class="t" style="left:112px;top:375px;letter-spacing:-0.12px">jonathantest.sql</div>
<div style="position:absolute;left:9px;top:582px;width:247px;height:16px;background:#f5f4ea"></div>
<div style="position:absolute;left:9px;top:583px;width:16px;height:15px;border:1px solid #fff;border-radius:2px;background:linear-gradient(180deg,#c8d8fc,#b0c8f8)"></div>
<svg style="position:absolute;left:13px;top:586px;" width="8" height="9" viewBox="0 0 8 9"><path d="M5.5 1 L2 4.5 L5.5 8" stroke="#4a5a8a" stroke-width="2" fill="none"/></svg>
<div style="position:absolute;left:32px;top:583px;width:205px;height:15px;border:1px solid #fff;border-radius:2px;background:linear-gradient(180deg,#cadafe,#b4cbf8)"></div>
<svg style="position:absolute;left:130px;top:587px;" width="8" height="7" viewBox="0 0 8 7"><path d="M0.5 0 L0.5 7 M2.5 0 L2.5 7 M4.5 0 L4.5 7 M6.5 0 L6.5 7" stroke="#8aa4d8"/></svg>
<div style="position:absolute;left:238px;top:583px;width:17px;height:15px;border:1px solid #fff;border-radius:2px;background:linear-gradient(180deg,#c8d8fc,#b0c8f8)"></div>
<svg style="position:absolute;left:243px;top:586px;" width="8" height="9" viewBox="0 0 8 9"><path d="M2.5 1 L6 4.5 L2.5 8" stroke="#4a5a8a" stroke-width="2" fill="none"/></svg>
<svg style="position:absolute;left:0px;top:598px;" width="240" height="28" viewBox="0 0 240 28">
<defs><linearGradient id="tabo" x1="0" y1="0" x2="0" y2="1"><stop offset="0" stop-color="#fdac50"/><stop offset="1" stop-color="#ffd8a0"/></linearGradient>
<linearGradient id="tabb" x1="0" y1="0" x2="0" y2="1"><stop offset="0" stop-color="#a4c2f4"/><stop offset="1" stop-color="#c8dcfc"/></linearGradient></defs>
<path d="M10.5 4.5 L30.5 24.5 L99.5 24.5 L82.5 4.5 Z" fill="url(#tabb)" stroke="#3a48a8"/>
<path d="M13 5.5 L31 23.5 L98 23.5" fill="none" stroke="#fff" stroke-width="1"/>
<path d="M154.5 4.5 L228.5 4.5 L228.5 21.5 L225.5 24.5 L160.5 24.5 L154.5 18.5 Z" fill="url(#tabb)" stroke="#3a48a8"/>
<path d="M157 20 L161 23.5 L226 23.5" fill="none" stroke="#fff"/>
<path d="M82 1 L82 4 L103 24 L151 24 L154 21 L154 1 Z" fill="url(#tabo)"/>
<path d="M82.5 4.5 L103.5 24.5 L151.5 24.5 L154.5 21.5 L154.5 4" fill="none" stroke="#3a48a8"/>
<path d="M85 5 L104 23.5 L151 23.5 L153.5 21 L153.5 4" fill="none" stroke="#fff"/>
</svg>
<svg style="position:absolute;left:38px;top:606px;" width="9" height="16" viewBox="0 0 9 16"><rect x="0.5" y="0.5" width="7" height="14" rx="1.2" fill="#e9e6c6" stroke="#4e4e4e"/><rect x="1" y="1" width="6" height="4" fill="#f4f2e0"/><rect x="1.5" y="1.8" width="2" height="1.4" fill="#555"/><rect x="1" y="5" width="6" height="2" fill="#fff"/><rect x="1" y="7" width="6" height="0.8" fill="#9a9a80"/><rect x="4.8" y="11.5" width="1.4" height="1.4" fill="#333"/></svg>
<div class="t" style="left:54px;top:607px;">Servers</div>
<svg style="position:absolute;left:107px;top:605px;" width="16" height="16" viewBox="0 0 16 16"><g transform="scale(0.9)"><path d="M4 1.5 L14.5 1.5 L14.5 12.5 L12 14.5 L2.5 14.5 Q0.5 14.5 1.5 12 L4 12 Z" fill="#f4f0dc" stroke="#8a7440"/><path d="M4 1.5 Q2 1.5 2.5 4 L4 4" fill="none" stroke="#8a7440"/><path d="M6 5 L12.5 5 M6 7.5 L12.5 7.5 M6 10 L12.5 10" stroke="#4c6cb8" stroke-dasharray="2 1"/></g></svg>
<div class="t" style="left:126px;top:607px;">Files</div>
<svg style="position:absolute;left:163px;top:606px;" width="17" height="14" viewBox="0 0 17 14"><rect x="2.5" y="2.5" width="12" height="3" fill="#fff" stroke="#c8a060"/><path d="M2.5 5.5 L2.5 12 L14.5 12 L14.5 5.5 Z" fill="#fbe090" stroke="#c8a060"/><path d="M3.5 12.5 L6.5 7.5 L16.5 7.5 L13.5 12.5 Z" fill="#9cd0f4" stroke="#3a50b0"/></svg>
<div class="t" style="left:183px;top:607px;">Projects</div>
<div style="position:absolute;left:263px;top:78px;width:27px;height:547px;background:#808080"></div>
<div style="position:absolute;left:957px;top:78px;width:10px;height:547px;background:#808080"></div>
<div style="position:absolute;left:967px;top:78px;width:24px;height:547px;background:linear-gradient(90deg,#dceafc,#b4cef2 50%,#88b0e4)"></div>
<div style="position:absolute;left:991px;top:78px;width:1px;height:547px;background:#3a48a8"></div>
<div style="position:absolute;left:957px;top:77px;width:34px;height:1px;background:#e4ecfa"></div>
<svg style="position:absolute;left:974px;top:84px;" width="14" height="10" viewBox="0 0 14 10"><rect x="0.5" y="0.5" width="13" height="9" fill="#f8f8fc" stroke="#a08848"/><rect x="0" y="0" width="14" height="3" fill="#1a5ab8"/><rect x="1" y="1" width="12" height="1" fill="#a8dcfc"/><path d="M1 5.5 H13 M1 7.5 H13 M4.5 3 V9 M7.5 3 V9 M10.5 3 V9" stroke="#c8b880"/><path d="M13.5 3 V9.5 H7" stroke="#8890b8" fill="none"/></svg>
<div class="t" style="left:988px;top:100px;transform-origin:0 0;transform:rotate(90deg)">Detail</div>
<div style="position:absolute;left:4px;top:625px;width:988px;height:1px;background:#c8d8f0"></div>
<div style="position:absolute;left:4px;top:626px;width:988px;height:19px;background:#ece9d8"></div>
<div class="t" style="left:8px;top:630px;">C:&#92;allan-cvs / cvstest / Links / Suggested Sites.url</div>
<div style="position:absolute;left:838px;top:628px;width:1px;height:16px;background:#aca899;box-shadow:1px 0 #fff"></div>
<div style="position:absolute;left:841px;top:628px;width:8px;height:16px;background:#dcd8c4"></div>
<div class="t" style="left:861px;top:630px;">37 : 251 : 3,555 MB</div>
<div style="position:absolute;left:972px;top:628px;width:1px;height:16px;background:#aca899;box-shadow:1px 0 #fff"></div>
<svg style="position:absolute;left:977px;top:630px;" width="12" height="14" viewBox="0 0 12 14"><rect x="4" y="0" width="4" height="2" fill="#222"/><rect x="0.5" y="1.5" width="11" height="2.5" fill="#ddd" stroke="#222"/><path d="M1.5 4 L1.5 12.5 L10.5 12.5 L10.5 4" fill="#f0f0f0" stroke="#222" stroke-width="1.6"/><path d="M4 5 V11.5 M6 5 V11.5 M8 5 V11.5" stroke="#555"/></svg>
<div style="position:absolute;left:290px;top:76px;width:667px;height:549px;background:#0a3ee0;border-radius:7px 7px 0 0"></div>
<div style="position:absolute;left:290px;top:76px;width:667px;height:30px;border-radius:7px 7px 0 0;background:linear-gradient(180deg,#0047d5 0px,#0047d5 1px,#2c8cf8 1px,#3a94fc 2px,#1a78f4 3px,#0c66ea 4px,#0058e4 5px,#0058e4 10px,#0062f0 12px,#0066f8 20px,#0066f8 26px,#0058e8 27px,#0040c8 28px,#0038b8 30px)"></div>
<div style="position:absolute;left:290px;top:106px;width:4px;height:519px;background:linear-gradient(90deg,#0020d0 0,#0020d0 1px,#0050f0 1px,#0058f8 3px,#0040e0 4px)"></div>
<div style="position:absolute;left:953px;top:106px;width:4px;height:519px;background:linear-gradient(90deg,#0048e8 0,#0048e8 1px,#0038d0 1px,#0038d0 2px,#0028b8 2px,#0028b8 3px,#001890 3px)"></div>
<div style="position:absolute;left:294px;top:621px;width:663px;height:4px;background:linear-gradient(180deg,#0048e8 0,#0048e8 1px,#0038d0 1px,#0038d0 2px,#0028b8 2px,#0028b8 3px,#001890 3px)"></div>
<div style="position:absolute;left:296px;top:83px;width:19px;height:19px;background:#fff"></div>
<svg style="position:absolute;left:296px;top:83px;" width="19" height="19" viewBox="0 0 19 19"><path d="M5.5 14.5 L9.3 4.6 Q10 3.6 10.7 4.6 L13.8 14.5" stroke="#1e2e64" stroke-width="2" fill="none" stroke-linecap="round"/><path d="M4 11.3 Q10 10.2 16.5 11.3" stroke="#1e2e64" stroke-width="1.5" fill="none"/></svg>
<div class="t" style="left:316px;top:87px;font-weight:bold;font-size:13px;line-height:13px;letter-spacing:-0.3px;color:#fff;text-shadow:1px 1px #0a1a80">CVS History - Suggested Sites.url</div>
<div style="position:absolute;left:884px;top:82px;width:21px;height:21px;border:1px solid #fff;border-radius:3px;background:linear-gradient(135deg,#5a8cfc,#1c5ef0)"></div>
<div style="position:absolute;left:907px;top:82px;width:21px;height:21px;border:1px solid #fff;border-radius:3px;background:linear-gradient(135deg,#5a8cfc,#1c5ef0)"></div>
<div style="position:absolute;left:930px;top:82px;width:21px;height:21px;border:1px solid #fff;border-radius:3px;background:linear-gradient(135deg,#f0886c,#d84c28)"></div>
<div style="position:absolute;left:889px;top:95px;width:7px;height:3px;background:#fff"></div>
<div style="position:absolute;left:912px;top:87px;width:11px;height:11px;border:1px solid #fff;border-top-width:3px"></div>
<svg style="position:absolute;left:935px;top:87px;" width="11" height="11" viewBox="0 0 11 11"><path d="M1 1 L10 10 M10 1 L1 10" stroke="#fff" stroke-width="1.8"/></svg>
<div style="position:absolute;left:294px;top:106px;width:659px;height:515px;background:#ece9d8"></div>
<div style="position:absolute;left:306px;top:123px;width:635px;height:312px;border:1px solid #d0d0bf;border-radius:3px"></div>
<div style="position:absolute;left:313px;top:118px;width:42px;height:12px;background:#ece9d8"></div>
<div class="t" style="left:317px;top:118px;color:#0046d5">History</div>
<div style="position:absolute;left:774px;top:138px;width:161px;height:18px;background:#fff;border:1px solid #7f9db9"></div>
<svg style="position:absolute;left:777px;top:141px;" width="19" height="12" viewBox="0 0 19 12"><circle cx="5.5" cy="5" r="3.8" fill="none" stroke="#8a8a8a" stroke-width="2"/><path d="M8.2 7.8 L11.5 11" stroke="#8a8a8a" stroke-width="2.4"/><path d="M13 5.5 L17 5.5 L15 7.5 Z" fill="#8a8a8a"/></svg>
<div style="position:absolute;left:312px;top:161px;width:623px;height:269px;background:#fff;border:1px solid #7f9db9"></div>
<div style="position:absolute;left:313px;top:162px;width:50px;height:267px;background:#ece9d8"></div>
<div style="position:absolute;left:313px;top:162px;width:621px;height:21px;background:#ece9d8"></div>
<div style="position:absolute;left:313px;top:162px;width:621px;height:1px;background:#f8f6ec"></div>
<div style="position:absolute;left:313px;top:179px;width:621px;height:3px;background:linear-gradient(180deg,#e4e0d0,#d6d2c2,#c9c5b4)"></div>
<div style="position:absolute;left:360px;top:165px;width:1px;height:13px;background:#c0bca8;box-shadow:1px 0 #fff"></div>
<div style="position:absolute;left:427px;top:165px;width:1px;height:13px;background:#c0bca8;box-shadow:1px 0 #fff"></div>
<div style="position:absolute;left:577px;top:165px;width:1px;height:13px;background:#c0bca8;box-shadow:1px 0 #fff"></div>
<div style="position:absolute;left:644px;top:165px;width:1px;height:13px;background:#c0bca8;box-shadow:1px 0 #fff"></div>
<div style="position:absolute;left:711px;top:165px;width:1px;height:13px;background:#c0bca8;box-shadow:1px 0 #fff"></div>
<div style="position:absolute;left:931px;top:165px;width:1px;height:13px;background:#c0bca8;box-shadow:1px 0 #fff"></div>
<div class="t" style="left:370px;top:166px;">Revision</div>
<div class="t" style="left:437px;top:166px;">Date</div>
<div class="t" style="left:587px;top:166px;">Author</div>
<div class="t" style="left:654px;top:166px;">Changes</div>
<div class="t" style="left:721px;top:166px;">Comment</div>
<div style="position:absolute;left:362px;top:182px;width:572px;height:33px;background:#efecdf"></div>
<div style="position:absolute;left:313px;top:183px;width:49px;height:15px;background:#ece9d8"></div>
<div style="position:absolute;left:313px;top:195px;width:49px;height:3px;background:linear-gradient(180deg,#e4e0d0,#d0ccba,#c4c0ae)"></div>
<div style="position:absolute;left:361px;top:183px;width:1px;height:15px;background:#cdc9b8"></div>
<div class="t" style="left:333px;top:183px;">1</div>
<div style="position:absolute;left:363px;top:183px;width:66px;height:15px;background:#316ac5"></div>
<div class="t" style="left:364px;top:184px;color:#fff">1.1</div>
<div style="position:absolute;left:430px;top:183px;width:149px;height:15px;background:#316ac5"></div>
<div class="t" style="left:431px;top:184px;color:#fff">7/9/2010 10:44:50 AM</div>
<div style="position:absolute;left:580px;top:183px;width:66px;height:15px;background:#316ac5"></div>
<div class="t" style="left:581px;top:184px;color:#fff">allan</div>
<div style="position:absolute;left:647px;top:183px;width:66px;height:15px;background:#316ac5"></div>
<div class="t" style="left:648px;top:184px;color:#fff"></div>
<div style="position:absolute;left:714px;top:183px;width:220px;height:15px;background:#316ac5"></div>
<div class="t" style="left:715px;top:184px;color:#fff">Initial revision</div>
<div style="position:absolute;left:313px;top:199px;width:49px;height:15px;background:#ece9d8"></div>
<div style="position:absolute;left:313px;top:211px;width:49px;height:3px;background:linear-gradient(180deg,#e4e0d0,#d0ccba,#c4c0ae)"></div>
<div style="position:absolute;left:361px;top:199px;width:1px;height:15px;background:#cdc9b8"></div>
<div class="t" style="left:333px;top:199px;">2</div>
<div style="position:absolute;left:363px;top:199px;width:66px;height:15px;background:#316ac5"></div>
<div class="t" style="left:364px;top:200px;color:#fff">1.1.1.1</div>
<div style="position:absolute;left:430px;top:199px;width:149px;height:15px;background:#316ac5"></div>
<div class="t" style="left:431px;top:200px;color:#fff">7/9/2010 10:44:50 AM</div>
<div style="position:absolute;left:580px;top:199px;width:66px;height:15px;background:#316ac5"></div>
<div class="t" style="left:581px;top:200px;color:#fff">allan</div>
<div style="position:absolute;left:647px;top:199px;width:66px;height:15px;background:#316ac5"></div>
<div class="t" style="left:648px;top:200px;color:#fff">+0 -0</div>
<div style="position:absolute;left:714px;top:199px;width:220px;height:15px;background:#316ac5"></div>
<div class="t" style="left:715px;top:200px;color:#fff">test</div>
<div style="position:absolute;left:617px;top:443px;width:2px;height:2px;background:#0a246a;box-shadow:1px 1px #fff"></div>
<div style="position:absolute;left:621px;top:443px;width:2px;height:2px;background:#0a246a;box-shadow:1px 1px #fff"></div>
<div style="position:absolute;left:625px;top:443px;width:2px;height:2px;background:#0a246a;box-shadow:1px 1px #fff"></div>
<div style="position:absolute;left:629px;top:443px;width:2px;height:2px;background:#0a246a;box-shadow:1px 1px #fff"></div>
<div style="position:absolute;left:306px;top:458px;width:635px;height:123px;border:1px solid #d0d0bf;border-radius:3px"></div>
<div style="position:absolute;left:313px;top:453px;width:58px;height:12px;background:#ece9d8"></div>
<div class="t" style="left:318px;top:454px;color:#0046d5">Comments</div>
<div style="position:absolute;left:312px;top:473px;width:623px;height:102px;background:#fff;border:1px solid #7f9db9"></div>
<div class="t" style="left:317px;top:479px;">Initial revision</div>
<div style="position:absolute;left:869px;top:589px;width:73px;height:21px;border:1px solid #003c74;border-radius:3px;background:linear-gradient(180deg,#fff,#f2f1ea 60%,#dcdad0);box-shadow:inset 0 -2px #b8c8f0, inset 0 1px #cddcfc"></div>
<div class="t" style="left:892px;top:593px;">Close</div>
<div style="position:absolute;left:759px;top:208px;width:121px;height:48px;background:#f6f6f6;border:1px solid #0a1a6e"></div>
<div style="position:absolute;left:760px;top:209px;width:119px;height:23px;background:#fff"></div>
<div style="position:absolute;left:760px;top:232px;width:25px;height:23px;background:linear-gradient(90deg,#dce8fa,#8aaae8)"></div>
<div style="position:absolute;left:762px;top:210px;width:115px;height:22px;background:linear-gradient(180deg,#fff2d8,#fde0b0 50%,#fcc886);border:1px solid #0a1a6e"></div>
<svg style="position:absolute;left:766px;top:214px;" width="14" height="15" viewBox="0 0 14 15"><rect x="0" y="0" width="13" height="1.6" fill="#3a4070"/><rect x="0.5" y="3.5" width="7" height="8" fill="#f4f8fc" stroke="#8a8060"/><path d="M2 5.5 H6 M2 7.5 H6 M2 9.5 H6" stroke="#4a70b8"/><rect x="5.5" y="5.5" width="7.5" height="8.5" fill="#f0f4fc" stroke="#6a7890"/><path d="M7 7.5 H11.5 M7 9.5 H11.5 M7 11.5 H11.5" stroke="#3a60b0" stroke-width="1.2"/></svg>
<div class="t" style="left:793px;top:215px;">Compare</div>
<svg style="position:absolute;left:765px;top:236px;" width="16" height="13" viewBox="0 0 16 13"><path d="M0.5 1.5 L5 1.5 L6 3 L13 3 L13 12.5 L0.5 12.5 Z" fill="#9c9c9c"/><path d="M1 12.5 L3.5 6 L15.5 6 L13 12.5 Z" fill="#b0b0b0"/></svg>
<div class="t" style="left:793px;top:237px;color:#a8a8a8">Open</div>
</body></html>
